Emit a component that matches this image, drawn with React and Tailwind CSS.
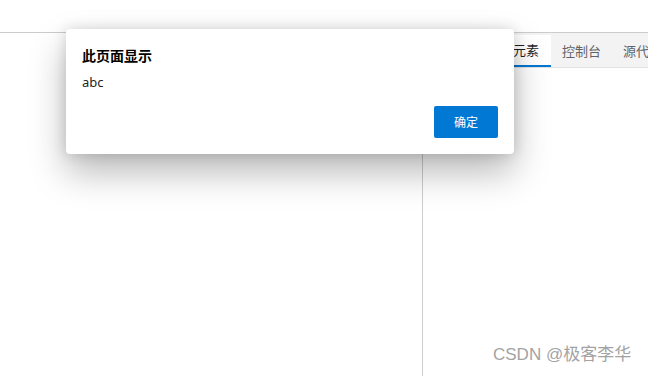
export default function App() {
  const tabs = ["元素", "控制台", "源代码"];

  return (
    <div
      className="relative w-[648px] h-[376px] overflow-hidden bg-white flex flex-col"
      style={{ fontFamily: '"Noto Sans", "Noto Sans CJK SC", sans-serif' }}
    >
      {/* browser top strip */}
      <div className="h-[33px] shrink-0 bg-white border-b border-[#cccccc]" />

      <div className="flex flex-1 min-h-0">
        {/* page */}
        <div className="flex-1 bg-white" />

        {/* devtools */}
        <div className="w-[226px] shrink-0 border-l border-[#cccccc] flex flex-col">
          <div className="h-[35px] shrink-0 bg-[#f3f3f3] border-b border-[#e3e3e3] flex items-end pl-[78px] overflow-hidden">
            {tabs.map((t, i) => (
              <div
                key={t}
                className={
                  i === 0
                    ? "h-[32px] shrink-0 px-3 flex items-center bg-white border-b-2 border-[#0078d4] text-[13px] text-[#1f1f1f] whitespace-nowrap"
                    : "h-[32px] shrink-0 px-[11px] flex items-center text-[13px] text-[#5f6368] whitespace-nowrap"
                }
                style={{ fontFamily: '"Noto Sans CJK SC", sans-serif' }}
              >
                {t}
              </div>
            ))}
          </div>
          <div className="flex-1 bg-white" />
        </div>
      </div>

      {/* alert dialog */}
      <div className="absolute left-[66px] top-[29px] w-[448px] h-[125px] bg-white rounded-[4px] p-4 flex flex-col shadow-[0_18px_36px_rgba(0,0,0,0.28),0_0_14px_rgba(0,0,0,0.14)]">
        <div
          className="text-[14px] leading-[20px] font-bold text-black"
          style={{ fontFamily: '"Noto Sans CJK SC", sans-serif' }}
        >
          此页面显示
        </div>
        <div className="mt-[7px] text-[13px] leading-[20px] text-[#1f1f1f]">abc</div>
        <div className="mt-auto flex justify-end">
          <button
            className="w-[64px] h-[32px] bg-[#0078d4] rounded-[2px] text-white text-[12px] flex items-center justify-center"
            style={{ fontFamily: '"Noto Sans CJK SC", sans-serif' }}
          >
            确定
          </button>
        </div>
      </div>

      {/* watermark */}
      <div
        className="absolute left-[493px] top-[345px] text-[17px] leading-[20px] text-[#a3a3a3] whitespace-nowrap"
        style={{ fontFamily: '"Liberation Sans", "Noto Sans CJK SC", sans-serif' }}
      >
        CSDN @极客李华
      </div>
    </div>
  );
}
